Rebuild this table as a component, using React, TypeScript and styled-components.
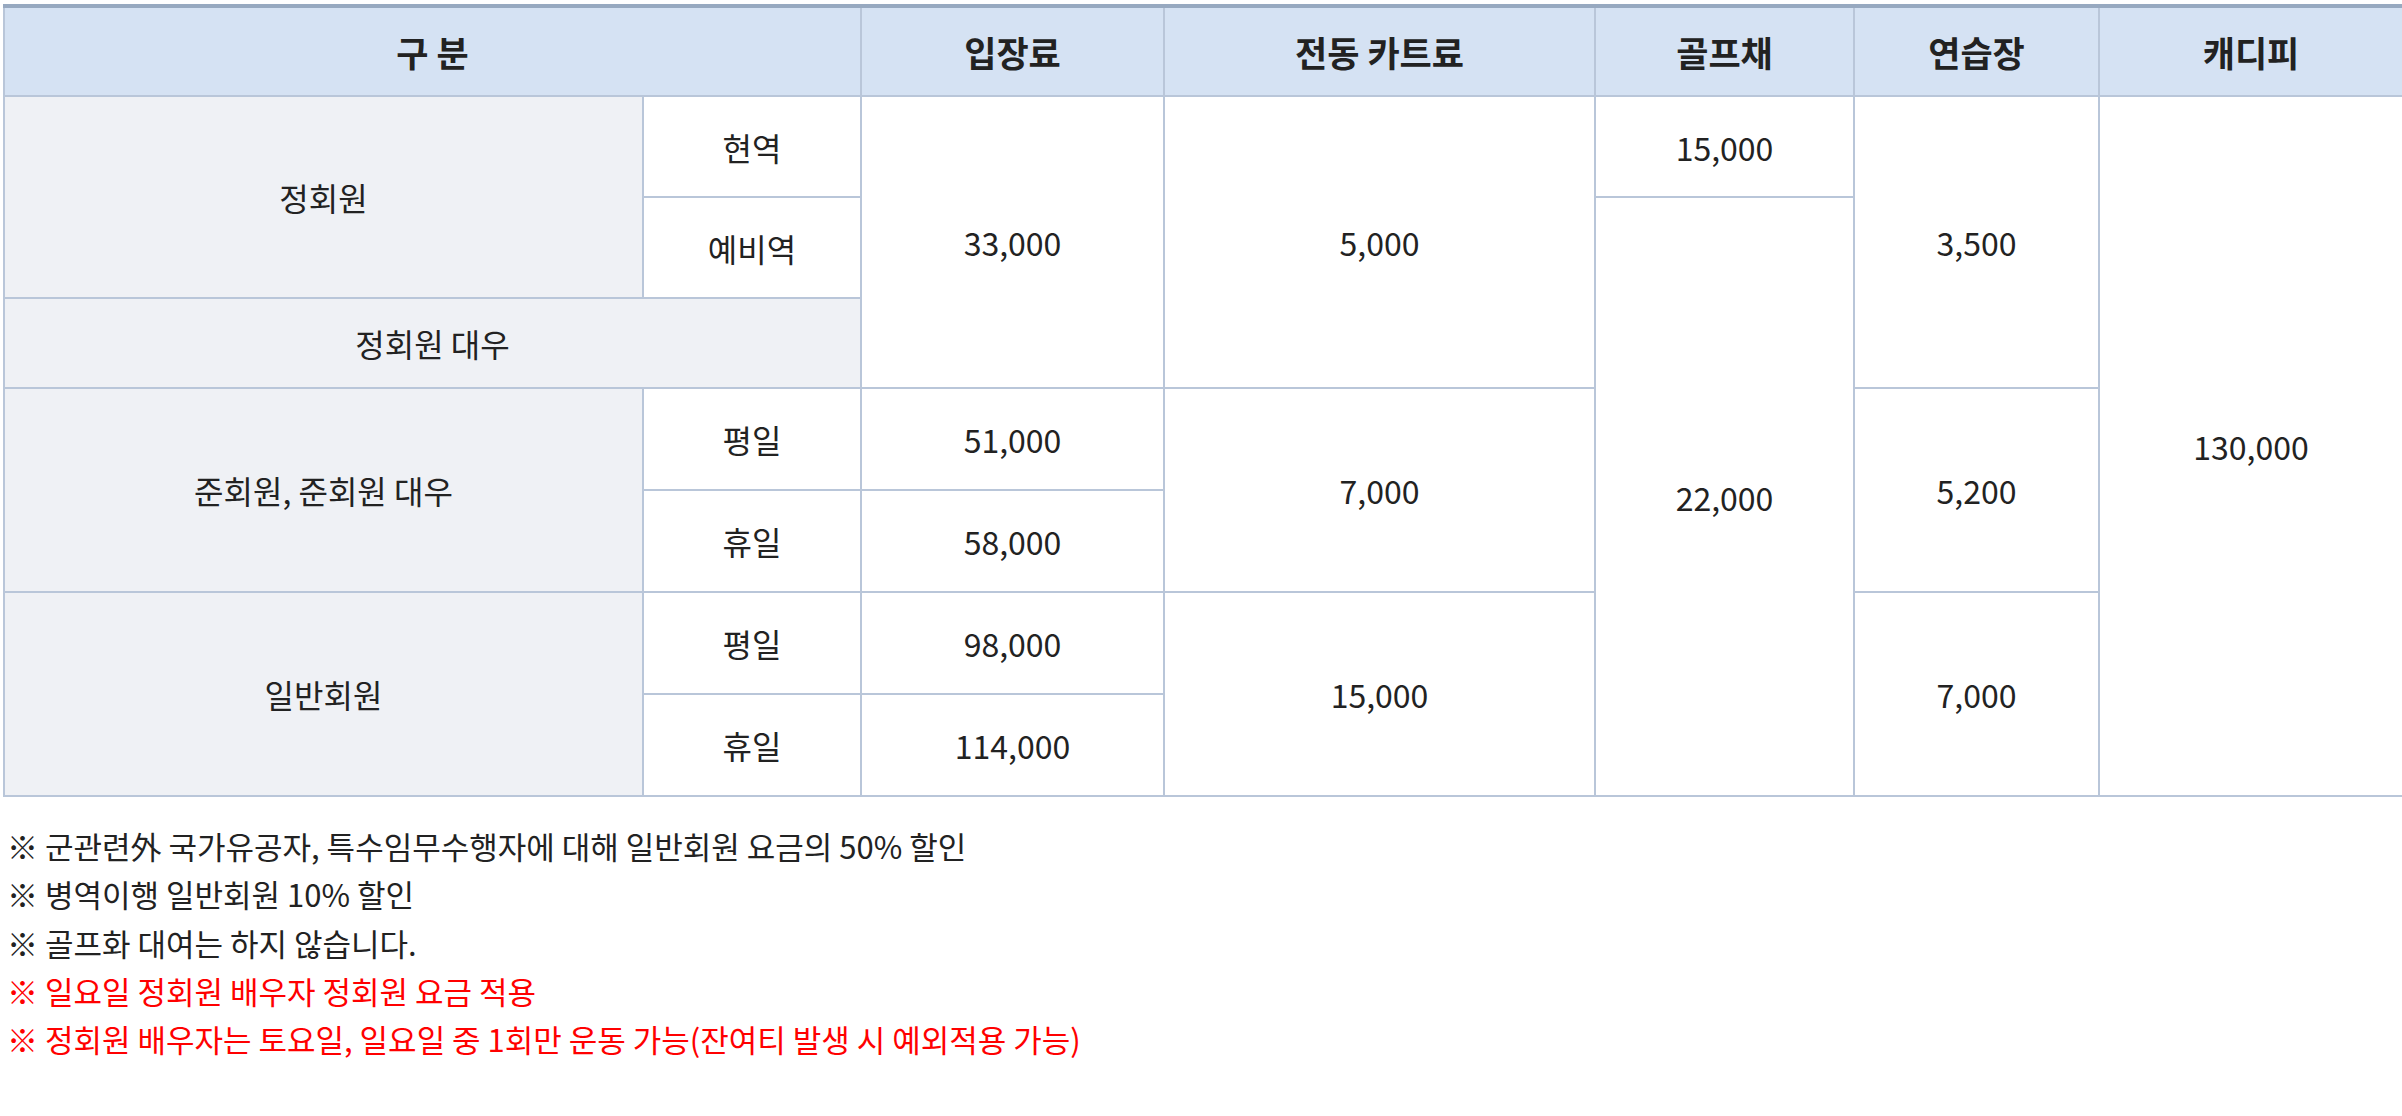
import React from "react";
import styled, { createGlobalStyle } from "styled-components";

const Global = createGlobalStyle`
  html, body {
    margin: 0;
    padding: 0;
    background: #ffffff;
  }
  body {
    font-family: "Noto Sans CJK KR", "Noto Sans", sans-serif;
    color: #222222;
  }
`;

const Page = styled.div`
  padding: 4px 0 0 3px;
`;

const FeeTable = styled.table`
  width: 2399px;
  border-collapse: collapse;
  table-layout: fixed;
  border-top: 4px solid #97a9c0;
  font-family: "Noto Sans CJK KR", "Noto Sans", sans-serif;
`;

const HeadCell = styled.th`
  height: 87px;
  padding: 0;
  background: #d5e2f3;
  border: 2px solid #b9c6d9;
  border-top: none;
  font-size: 35px;
  font-weight: 700;
  color: #222222;
  text-align: center;
  vertical-align: middle;
`;

const Cell = styled.td<{ $label?: boolean; $h?: number }>`
  height: ${(p) => (p.$h ? `${p.$h}px` : "auto")};
  padding: 0;
  border: 2px solid #b9c6d9;
  background: ${(p) => (p.$label ? "#eff1f5" : "#ffffff")};
  font-size: 32px;
  font-weight: 400;
  color: #222222;
  text-align: center;
  vertical-align: middle;
`;

const Notes = styled.ul`
  list-style: none;
  margin: 25px 0 0 0;
  padding: 0 0 0 4px;
`;

const Note = styled.li<{ $red?: boolean }>`
  font-size: 31px;
  line-height: 48.25px;
  color: ${(p) => (p.$red ? "#ff0000" : "#222222")};
`;

const widths = [639, 218, 303, 431, 259, 245, 304];

const notes: { text: string; red?: boolean }[] = [
  { text: "※ 군관련外 국가유공자, 특수임무수행자에 대해 일반회원 요금의 50% 할인" },
  { text: "※ 병역이행 일반회원 10% 할인" },
  { text: "※ 골프화 대여는 하지 않습니다." },
  { text: "※ 일요일 정회원 배우자 정회원 요금 적용", red: true },
  { text: "※ 정회원 배우자는 토요일, 일요일 중 1회만 운동 가능(잔여티 발생 시 예외적용 가능)", red: true },
];

export default function App() {
  return (
    <>
      <Global />
      <Page>
        <FeeTable>
          <colgroup>
            {widths.map((w, i) => (
              <col key={i} style={{ width: w }} />
            ))}
          </colgroup>
          <thead>
            <tr>
              <HeadCell colSpan={2}>구 분</HeadCell>
              <HeadCell>입장료</HeadCell>
              <HeadCell>전동 카트료</HeadCell>
              <HeadCell>골프채</HeadCell>
              <HeadCell>연습장</HeadCell>
              <HeadCell>캐디피</HeadCell>
            </tr>
          </thead>
          <tbody>
            <tr>
              <Cell $label rowSpan={2}>정회원</Cell>
              <Cell $h={99}>현역</Cell>
              <Cell rowSpan={3}>33,000</Cell>
              <Cell rowSpan={3}>5,000</Cell>
              <Cell>15,000</Cell>
              <Cell rowSpan={3}>3,500</Cell>
              <Cell rowSpan={7}>130,000</Cell>
            </tr>
            <tr>
              <Cell $h={99}>예비역</Cell>
              <Cell rowSpan={6}>22,000</Cell>
            </tr>
            <tr>
              <Cell $label colSpan={2} $h={88}>정회원 대우</Cell>
            </tr>
            <tr>
              <Cell $label rowSpan={2}>준회원, 준회원 대우</Cell>
              <Cell $h={100}>평일</Cell>
              <Cell>51,000</Cell>
              <Cell rowSpan={2}>7,000</Cell>
              <Cell rowSpan={2}>5,200</Cell>
            </tr>
            <tr>
              <Cell $h={100}>휴일</Cell>
              <Cell>58,000</Cell>
            </tr>
            <tr>
              <Cell $label rowSpan={2}>일반회원</Cell>
              <Cell $h={100}>평일</Cell>
              <Cell>98,000</Cell>
              <Cell rowSpan={2}>15,000</Cell>
              <Cell rowSpan={2}>7,000</Cell>
            </tr>
            <tr>
              <Cell $h={100}>휴일</Cell>
              <Cell>114,000</Cell>
            </tr>
          </tbody>
        </FeeTable>
        <Notes>
          {notes.map((n, i) => (
            <Note key={i} $red={n.red}>
              {n.text}
            </Note>
          ))}
        </Notes>
      </Page>
    </>
  );
}
